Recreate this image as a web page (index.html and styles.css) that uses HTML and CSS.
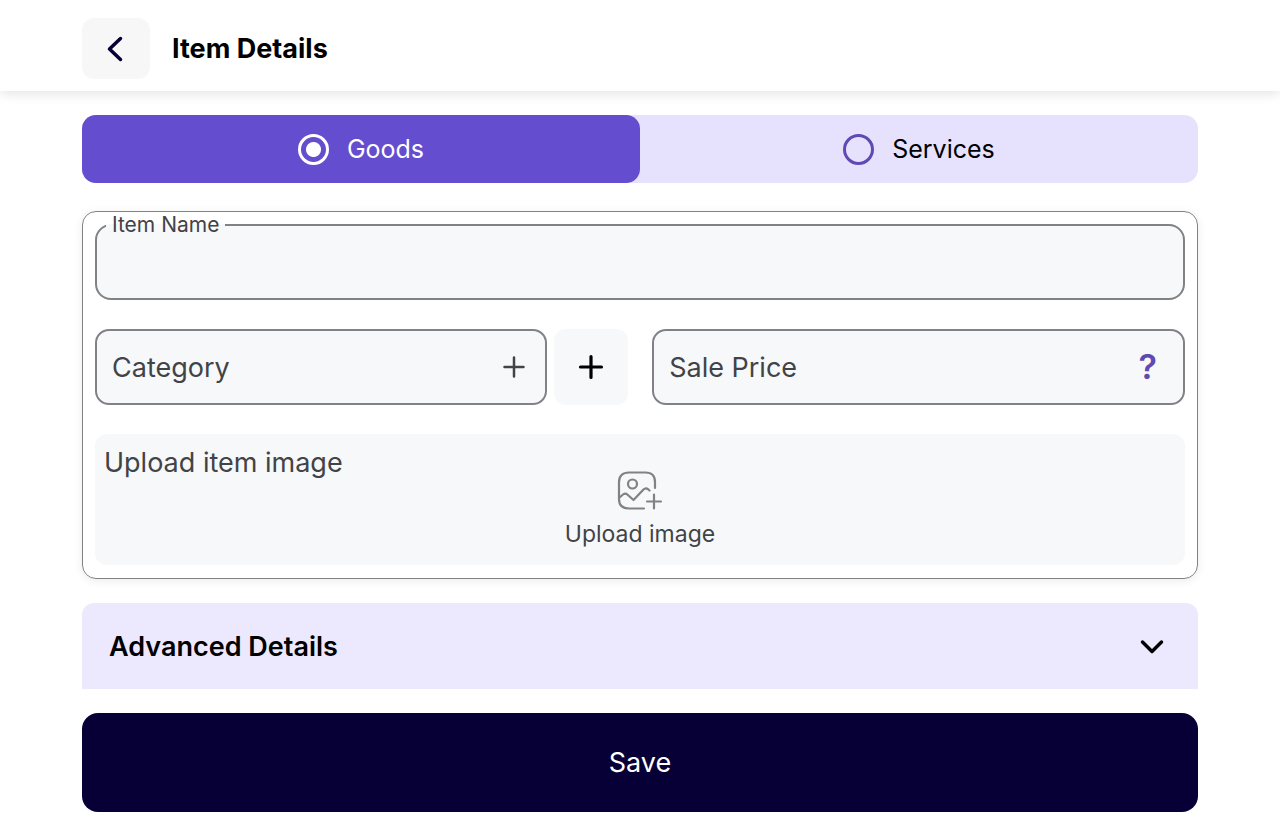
FILE: index.html
```html
<!DOCTYPE html>
<html lang="en">
<head>
  <meta charset="UTF-8" />
  <meta name="viewport" content="width=device-width, initial-scale=1.0"/>
  <title>Item Details</title>
  <link rel="stylesheet" href="styles.css">
</head>
<body>
  <header class="topbar">
    <button type="button" class="btn-back" aria-label="Back">
      <svg width="18" height="26" viewBox="0 0 18 26" fill="none" stroke="currentColor" stroke-width="3.500" stroke-linecap="round" stroke-linejoin="round"><path d="M13.500 2.500 2.500 13l11 10.500"/></svg>
    </button>
    <h1>Item Details</h1>
  </header>

  <form class="container">
    <div class="tabs">
      <label class="tab"><input type="radio" name="type" value="goods" checked /> Goods</label>
      <label class="tab"><input type="radio" name="type" value="services" /> Services</label>
    </div>

    <div class="card">
      <fieldset class="item-name">
        <legend><label for="itemName">Item Name</label></legend>
        <input type="text" id="itemName" />
      </fieldset>

      <div class="row">
        <div class="field category">
          <input type="text" id="category" placeholder="Category" aria-label="Category" />
          <svg class="field-plus" width="22" height="22" viewBox="0 0 22 22" fill="none" stroke="currentColor" stroke-width="2.500" stroke-linecap="round"><path d="M11 1.500v19M1.500 11h19"/></svg>
        </div>
        <button type="button" class="btn-add" aria-label="Add category">
          <svg width="26" height="26" viewBox="0 0 26 26" fill="none" stroke="currentColor" stroke-width="3.200" stroke-linecap="round"><path d="M13 2.500v21M2.500 13h21"/></svg>
        </button>
        <div class="field price">
          <input type="text" id="salePrice" placeholder="Sale Price" aria-label="Sale Price" inputmode="decimal" />
          <button type="button" class="btn-help" aria-label="Help">?</button>
        </div>
      </div>

      <div class="upload">
        <h2>Upload item image</h2>
        <button type="button" class="btn-upload">
          <svg width="46" height="40" viewBox="0 0 46 40" fill="none" stroke="currentColor" stroke-width="2.200" stroke-linecap="round" stroke-linejoin="round">
            <path d="M38 17v-6c0-6-3-9.500-9.500-9.500H12C5.500 1.500 2 5 2 11v17c0 6 3.500 9.500 10 9.500h15"/>
            <circle cx="15.500" cy="13" r="4.500"/>
            <path d="M2.500 26.500l3.500-3c1.500-1.200 3-1.200 4.300 0l6.200 5.500 10-10.500c1.600-1.500 3.200-1.500 4.700-.2l1.300 1.200"/>
            <path d="M37 23.500v14M30 30.500h14"/>
          </svg>
          <span>Upload image</span>
        </button>
      </div>
    </div>

    <button type="button" class="advanced" aria-expanded="false">
      <span>Advanced Details</span>
      <svg width="24" height="16" viewBox="0 0 24 16" fill="none" stroke="currentColor" stroke-width="3.500" stroke-linecap="round" stroke-linejoin="round"><path d="M2.500 3 12 12.500 21.500 3"/></svg>
    </button>

    <button type="submit" class="btn-save">Save</button>
  </form>
</body>
</html>
```
FILE: styles.css
```css
:root {
  --primary: #644dcf;
  --primary-light: #e6e1fc;
  --accent: #5e4ab2;
  --dark: #060036;
  --text: #424347;
  --border: #818286;
  --field: #f7f8fa;
}

* {
  box-sizing: border-box;
}

body {
  margin: 0;
  font-family: Inter, sans-serif;
  font-size: 27px;
  line-height: 34px;
  color: #000;
  background-color: #fff;
}

button,
input {
  font: inherit;
  color: inherit;
}

button {
  border: none;
  padding: 0;
  cursor: pointer;
}

svg {
  display: block;
}

.topbar {
  display: flex;
  align-items: center;
  gap: 22px;
  padding: 18px 82px 12px;
  box-shadow: 0 2px 12px rgba(0, 0, 0, 0.12);
}

.btn-back {
  display: flex;
  align-items: center;
  justify-content: center;
  width: 68px;
  height: 61px;
  border-radius: 12px;
  background-color: #f7f7f7;
  color: var(--dark);
}

h1 {
  margin: 0;
  font-size: 27px;
  font-weight: 700;
}

.container {
  display: flex;
  flex-direction: column;
  gap: 24px;
  padding: 24px 82px 20px;
}

.tabs {
  display: flex;
  margin-bottom: 4px;
  border-radius: 14px;
  background-color: var(--primary-light);
}

.tab {
  flex: 1;
  display: flex;
  align-items: center;
  justify-content: center;
  gap: 18px;
  height: 68px;
  border-radius: 14px;
  font-size: 25px;
  cursor: pointer;
}

.tab:has(input:checked) {
  background-color: var(--primary);
  color: #fff;
}

.tab input {
  appearance: none;
  width: 31px;
  height: 31px;
  margin: 0;
  border: 3px solid var(--accent);
  border-radius: 50%;
}

.tab input:checked {
  border-color: #fff;
  background: radial-gradient(circle, #fff 7px, transparent 8px);
}

.card {
  display: flex;
  flex-direction: column;
  gap: 29px;
  padding: 0 12px 13px;
  border: 1px solid var(--border);
  border-radius: 14px;
  box-shadow: 0 2px 10px rgba(0, 0, 0, 0.08);
  color: var(--text);
}

.item-name {
  min-width: 0;
  height: 88px;
  margin: 0;
  padding: 0 9px;
  border: 2px solid var(--border);
  border-radius: 16px;
  background-color: var(--field);
}

.item-name legend {
  padding: 0 6px;
  font-size: 21px;
  line-height: 25px;
}

.item-name legend label {
  display: block;
}

.item-name input {
  width: 100%;
  height: 56px;
  padding: 0 6px;
  border: none;
  background: none;
  outline: none;
}

.row {
  display: flex;
}

.field {
  display: flex;
  align-items: center;
  height: 76px;
  min-width: 0;
  border: 2px solid var(--border);
  border-radius: 14px;
  background-color: var(--field);
}

.field input {
  flex: 1;
  min-width: 0;
  height: 100%;
  padding: 0 15px;
  border: none;
  background: none;
  outline: none;
}

.field input::placeholder {
  color: var(--text);
  opacity: 1;
}

.category {
  flex: 453 1 0;
  padding-right: 20px;
}

.price {
  flex: 532 1 0;
  padding-right: 26px;
}

.btn-add {
  display: flex;
  align-items: center;
  justify-content: center;
  width: 74px;
  margin: 0 24px 0 7px;
  border-radius: 12px;
  background-color: var(--field);
  color: #000;
}

.btn-help {
  background: none;
  color: var(--accent);
  font-size: 34px;
  font-weight: 600;
}

/* title and picker share one cell so the picker stays centered */
.upload {
  display: grid;
  height: 131px;
  border-radius: 12px;
  background-color: var(--field);
}

.upload h2 {
  grid-area: 1 / 1;
  justify-self: start;
  margin: 0;
  padding: 12px 9px;
  font-size: 27px;
  font-weight: 400;
}

.btn-upload {
  grid-area: 1 / 1;
  justify-self: center;
  align-self: end;
  display: flex;
  flex-direction: column;
  align-items: center;
  gap: 6px;
  padding-bottom: 14px;
  background: none;
  font-size: 23px;
}

.btn-upload svg {
  color: #818286;
}

.advanced {
  display: flex;
  align-items: center;
  justify-content: space-between;
  height: 86px;
  padding: 2px 34px 0 27px;
  border-radius: 12px 12px 0 0;
  background-color: #ece9fe;
  font-weight: 600;
}

.btn-save {
  height: 99px;
  border-radius: 16px;
  background-color: var(--dark);
  color: #fff;
}
```
